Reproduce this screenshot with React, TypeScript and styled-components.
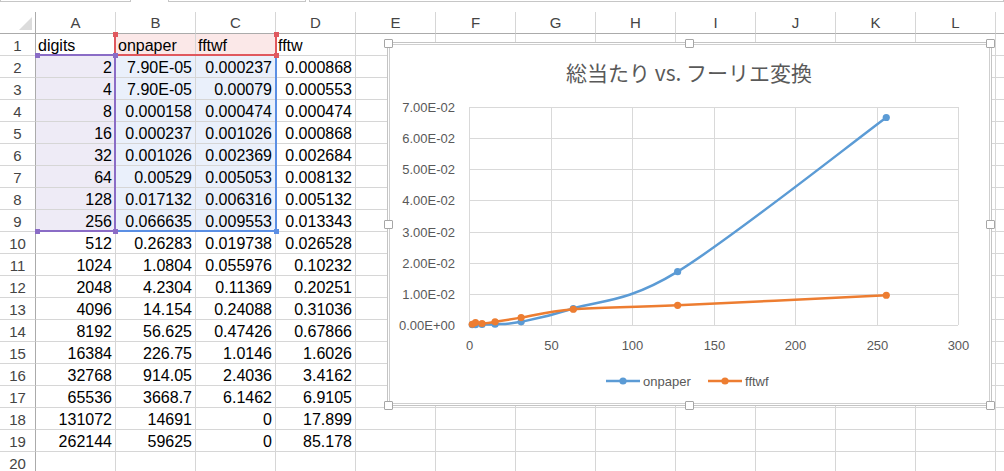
import React from 'react';
import styled, {createGlobalStyle} from 'styled-components';

const GlobalStyle = createGlobalStyle`
  html, body {
    margin: 0;
    padding: 0;
    background: #fff;
    overflow: hidden;
  }
  body {
    font-family: "Liberation Sans", Arial, sans-serif;
  }
`;

// the last column only peeks in at the right edge, its letter is off screen
const COLUMNS = ['A', 'B', 'C', 'D', 'E', 'F', 'G', 'H', 'I', 'J', 'K', 'L', ''];

const ROWS: string[][] = [
    ['digits', 'onpaper', 'fftwf', 'fftw'],
    ['2', '7.90E-05', '0.000237', '0.000868'],
    ['4', '7.90E-05', '0.00079', '0.000553'],
    ['8', '0.000158', '0.000474', '0.000474'],
    ['16', '0.000237', '0.001026', '0.000868'],
    ['32', '0.001026', '0.002369', '0.002684'],
    ['64', '0.00529', '0.005053', '0.008132'],
    ['128', '0.017132', '0.006316', '0.005132'],
    ['256', '0.066635', '0.009553', '0.013343'],
    ['512', '0.26283', '0.019738', '0.026528'],
    ['1024', '1.0804', '0.055976', '0.10232'],
    ['2048', '4.2304', '0.11369', '0.20251'],
    ['4096', '14.154', '0.24088', '0.31036'],
    ['8192', '56.625', '0.47426', '0.67866'],
    ['16384', '226.75', '1.0146', '1.6026'],
    ['32768', '914.05', '2.4036', '3.4162'],
    ['65536', '3668.7', '6.1462', '6.9105'],
    ['131072', '14691', '0', '17.899'],
    ['262144', '59625', '0', '85.178'],
    [],
];

const PURPLE = '#8a6cc6';
const RED = '#e0585e';
const BLUE = '#5b8fe4';

const Page = styled.div`
  position: relative;
  width: 1004px;
  height: 471px;
  overflow: hidden;
`;

const TopStrip = styled.div`
  display: flex;
  height: 12px;
`;

const StripBox = styled.div<{$width: number; $gap: number}>`
  box-sizing: border-box;
  width: ${p => p.$width}px;
  margin-left: ${p => p.$gap}px;
  height: 2px;
  border: 1px solid #c6c6c6;
  border-top: none;
  flex: ${p => (p.$width ? '0 0 auto' : '1')};
`;

const Sheet = styled.div`
  display: grid;
  grid-template-columns: 36px repeat(13, 80px);
  grid-template-rows: 22px;
  grid-auto-rows: 22px;
`;

const Corner = styled.div`
  box-sizing: border-box;
  border-right: 1px solid #ababab;
  border-bottom: 1px solid #ababab;
  display: flex;
  align-items: flex-end;
  justify-content: flex-end;
  padding: 0 3px 3px 0;
`;

const CornerMark = styled.div`
  width: 0;
  height: 0;
  border-left: 13px solid transparent;
  border-bottom: 13px solid #dcdcdc;
`;

const ColHead = styled.div`
  box-sizing: border-box;
  border-right: 1px solid #d6d6d6;
  border-bottom: 1px solid #ababab;
  text-align: center;
  font-size: 15px;
  line-height: 21px;
  color: #444;
`;

const RowHead = styled.div`
  box-sizing: border-box;
  border-right: 1px solid #ababab;
  border-bottom: 1px solid #d6d6d6;
  text-align: center;
  font-size: 15px;
  line-height: 18px;
  padding-top: 3px;
  color: #444;
`;

const Cell = styled.div<{$text?: boolean; $tint?: string}>`
  box-sizing: border-box;
  border-right: 1px solid #d6d6d6;
  border-bottom: 1px solid #d6d6d6;
  background: ${p => p.$tint ?? '#fff'};
  font-size: 16px;
  line-height: 18px;
  padding: 3px 3px 0 2px;
  text-align: ${p => (p.$text ? 'left' : 'right')};
  color: #000;
  white-space: nowrap;
  overflow: hidden;
`;

const RangeFrame = styled.div<{$color: string; $sides: string}>`
  position: absolute;
  box-sizing: border-box;
  pointer-events: none;
  border-style: solid;
  border-color: ${p => p.$color};
  border-width: ${p => ['top', 'right', 'bottom', 'left'].map(s => (p.$sides.includes(s) ? '2px' : '0')).join(' ')};
`;

const RangeDot = styled.div<{$color: string}>`
  position: absolute;
  width: 5px;
  height: 5px;
  margin: -2px 0 0 -2px;
  background: ${p => p.$color};
`;

const ChartBox = styled.div`
  position: absolute;
  left: 387px;
  top: 42px;
  width: 605px;
  height: 364px;
  box-sizing: border-box;
  background: #fff;
  border: 1px solid #c4c4c4;
  box-shadow: inset 0 0 0 1px #fff, inset 0 0 0 2px #cfcfcf;
`;

const ChartHandle = styled.div`
  position: absolute;
  width: 7px;
  height: 7px;
  margin: -4px 0 0 -4px;
  background: #fff;
  border: 1px solid #a6a6a6;
  border-radius: 1px;
`;

const ChartSvg = styled.svg`
  display: block;
  font-family: "Liberation Sans", Arial, sans-serif;
`;

// plot area inside the chart, in chart coordinates
const PLOT = {left: 81, right: 570, top: 64, bottom: 282};
const xOf = (v: number) => PLOT.left + (v / 300) * (PLOT.right - PLOT.left);
const yOf = (v: number) => PLOT.bottom - (v / 0.07) * (PLOT.bottom - PLOT.top);

const DIGITS = [2, 4, 8, 16, 32, 64, 128, 256];
const SERIES = [
    {name: 'onpaper', color: '#5b9bd5', values: [7.9e-5, 7.9e-5, 0.000158, 0.000237, 0.001026, 0.00529, 0.017132, 0.066635]},
    {name: 'fftwf', color: '#ed7d31', values: [0.000237, 0.00079, 0.000474, 0.001026, 0.002369, 0.005053, 0.006316, 0.009553]},
];

type Pt = [number, number];

// catmull-rom through the points, written as cubic beziers
const smoothPath = (pts: Pt[]) => {
    let d = `M${pts[0][0]},${pts[0][1]}`;
    for (let i = 0; i < pts.length - 1; i++) {
        const p0 = pts[i - 1] ?? pts[i];
        const p1 = pts[i];
        const p2 = pts[i + 1];
        const p3 = pts[i + 2] ?? p2;
        const c1: Pt = [p1[0] + (p2[0] - p0[0]) / 6, p1[1] + (p2[1] - p0[1]) / 6];
        const c2: Pt = [p2[0] - (p3[0] - p1[0]) / 6, p2[1] - (p3[1] - p1[1]) / 6];
        d += ` C${c1[0]},${c1[1]} ${c2[0]},${c2[1]} ${p2[0]},${p2[1]}`;
    }
    return d;
};

const tintFor = (row: number, col: number) => {
    if (row === 0 && (col === 1 || col === 2)) return '#fbe8e8';
    if (row >= 1 && row <= 8 && col === 0) return '#eeebf6';
    if (row >= 1 && row <= 8 && (col === 1 || col === 2)) return '#eaf0fb';
    return undefined;
};

const Chart: React.FC = () => {
    const yTicks = [0, 1, 2, 3, 4, 5, 6, 7];
    const xTicks = [0, 50, 100, 150, 200, 250, 300];
    return (
        <ChartSvg width={603} height={362}>
            <text x={301} y={29} textAnchor="middle" dominantBaseline="central"
                  fontSize={21} fill="#595959"
                  fontFamily='"Noto Sans CJK JP", "Noto Sans", sans-serif'>
                総当たり vs. フーリエ変換
            </text>
            {yTicks.map(t => {
                const y = Math.round(yOf(t / 100)) + 0.5;
                return (
                    <g key={t}>
                        <line x1={PLOT.left} x2={PLOT.right} y1={y} y2={y} stroke="#d9d9d9"/>
                        <text x={67} y={y} textAnchor="end" dominantBaseline="central"
                              fontSize={13} fill="#595959">
                            {t === 0 ? '0.00E+00' : `${t}.00E-02`}
                        </text>
                    </g>
                );
            })}
            {xTicks.map(t => {
                const x = Math.round(xOf(t)) + 0.5;
                return (
                    <g key={t}>
                        <line x1={x} x2={x} y1={PLOT.top} y2={PLOT.bottom} stroke="#d9d9d9"/>
                        <text x={x} y={302} textAnchor="middle" dominantBaseline="central"
                              fontSize={13} fill="#595959">{t}</text>
                    </g>
                );
            })}
            {SERIES.map(s => {
                const pts: Pt[] = DIGITS.map((d, i) => [xOf(d), yOf(s.values[i])]);
                return (
                    <g key={s.name}>
                        <path d={smoothPath(pts)} fill="none" stroke={s.color} strokeWidth={2.5}
                              strokeLinejoin="round" strokeLinecap="round"/>
                        {pts.map((p, i) => <circle key={i} cx={p[0]} cy={p[1]} r={3.6} fill={s.color}/>)}
                    </g>
                );
            })}
            {SERIES.map((s, i) => {
                const x = i === 0 ? 218 : 320;
                return (
                    <g key={s.name}>
                        <line x1={x} x2={x + 34} y1={338} y2={338} stroke={s.color} strokeWidth={2.5}/>
                        <circle cx={x + 17} cy={338} r={3.6} fill={s.color}/>
                        <text x={x + 37} y={338} dominantBaseline="central" fontSize={13} fill="#595959">
                            {s.name}
                        </text>
                    </g>
                );
            })}
        </ChartSvg>
    );
};

const App: React.FC = () => {
    const handles: Pt[] = [
        [388, 43], [689, 43], [990, 43],
        [388, 224], [990, 224],
        [388, 405], [689, 405], [990, 405],
    ];
    return (
        <Page>
            <GlobalStyle/>
            <TopStrip>
                <StripBox $width={131} $gap={0}/>
                <StripBox $width={138} $gap={37}/>
                <StripBox $width={0} $gap={3}/>
            </TopStrip>
            <Sheet>
                <Corner><CornerMark/></Corner>
                {COLUMNS.map((c, ci) => <ColHead key={ci}>{c}</ColHead>)}
                {ROWS.map((row, r) => (
                    <React.Fragment key={r}>
                        <RowHead>{r + 1}</RowHead>
                        {COLUMNS.map((_, ci) => (
                            <Cell key={ci} $text={r === 0} $tint={tintFor(r, ci)}>{row[ci] ?? ''}</Cell>
                        ))}
                    </React.Fragment>
                ))}
            </Sheet>

            <RangeFrame $color={BLUE} $sides="right bottom" style={{left: 114, top: 55, width: 163, height: 177}}/>
            <RangeFrame $color={RED} $sides="left right bottom" style={{left: 114, top: 33, width: 163, height: 23}}/>
            <RangeFrame $color={PURPLE} $sides="top right bottom" style={{left: 36, top: 54, width: 80, height: 178}}/>
            <RangeDot $color={RED} style={{left: 115, top: 34}}/>
            <RangeDot $color={RED} style={{left: 276, top: 34}}/>
            <RangeDot $color={RED} style={{left: 276, top: 55}}/>
            <RangeDot $color={PURPLE} style={{left: 37, top: 55}}/>
            <RangeDot $color={PURPLE} style={{left: 115, top: 55}}/>
            <RangeDot $color={PURPLE} style={{left: 37, top: 231}}/>
            <RangeDot $color={PURPLE} style={{left: 115, top: 231}}/>
            <RangeDot $color={BLUE} style={{left: 276, top: 231}}/>

            <ChartBox>
                <Chart/>
            </ChartBox>
            {handles.map(([x, y]) => <ChartHandle key={`${x}-${y}`} style={{left: x, top: y}}/>)}
        </Page>
    );
};

export default App;
